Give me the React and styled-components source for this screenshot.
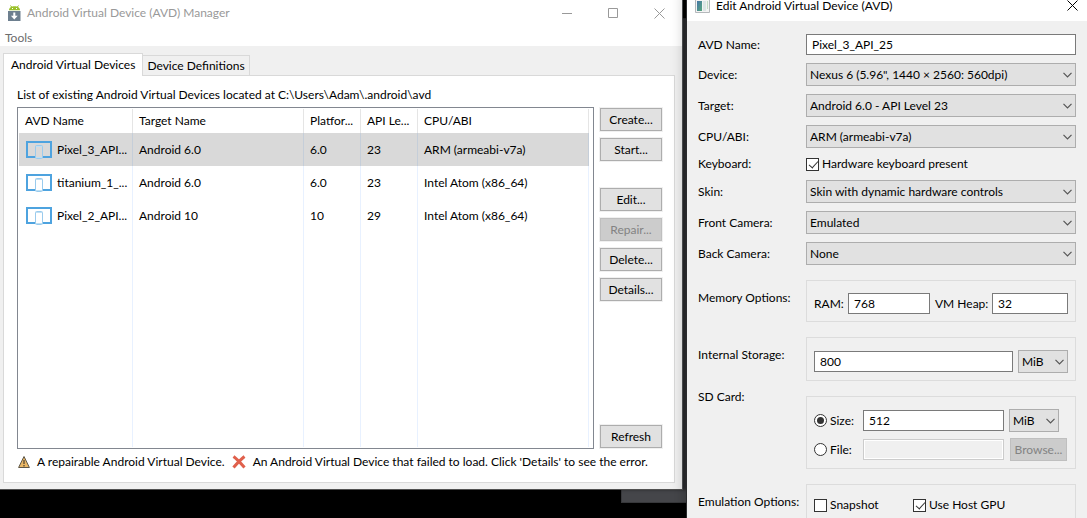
import React, { useState } from "react";
import styled, { createGlobalStyle } from "styled-components";

const GlobalStyle = createGlobalStyle`
  * {
    box-sizing: border-box;
  }
  body {
    margin: 0;
    background: #000;
    overflow: hidden;
  }
  body, button, input, select {
    font-family: Lato, "Open Sans", sans-serif;
    font-size: 12px;
    line-height: 16px;
    color: #000;
  }
`;

const Desktop = styled.div`
  position: relative;
  display: flex;
  align-items: flex-start;
  gap: 3px;
  height: 100vh;
  overflow: hidden;
  background: #000;
`;
const BackWindow = styled.div`
  position: absolute;
  top: 18px;
  left: 621px;
  right: 0;
  height: 485px;
  background: #45464a;
  border: 1px solid #37383b;
`;

/* windows */
const ManagerWindow = styled.section`
  position: relative;
  flex: 1;
  min-width: 0;
  background: #f0f0f0;
  border-right: 1px solid #505254;
  border-bottom: 1px solid #505050;
  box-shadow: 4px 0 3px rgba(0, 0, 0, 0.4);
`;
const DialogWindow = styled.section`
  position: relative;
  flex: 0 0 401px;
  min-height: calc(100% + 40px);
  margin-top: -10px;
  background: #f0f0f0;
  border-left: 1px solid #2a2b2d;
  box-shadow: 0 0 14px rgba(0, 0, 0, 0.3);
`;
const TitleBar = styled.header`
  display: flex;
  align-items: center;
  height: ${(props) => (props.$dialog ? "31px" : "26px")};
  padding-left: 8px;
  background: #fff;
  color: ${(props) => (props.$dialog ? "#000" : "#999")};
`;
const Title = styled.h1`
  flex: 1;
  margin: 0 0 0 6px;
  font-size: 12px;
  line-height: 12px;
  font-weight: 400;
  white-space: nowrap;
`;
const WindowButton = styled.button`
  display: flex;
  align-items: center;
  justify-content: center;
  width: ${(props) => (props.$dialog ? "29px" : "46px")};
  height: 26px;
  padding: 0;
  border: 0;
  background: none;
  color: inherit;
`;
const MenuBar = styled.nav`
  display: flex;
  height: 20px;
  padding-left: 5px;
  background: #fff;
`;
const MenuItem = styled.button`
  padding: 4px 0 0;
  border: 0;
  background: none;
  color: #6d6d6d;
`;

/* tabs */
const ManagerBody = styled.div`
  padding: 7px 7px 6px 3px;
`;
const TabList = styled.div`
  display: flex;
  align-items: flex-end;
`;
const Tab = styled.button`
  position: relative;
  height: ${(props) => (props.$active ? "23px" : "20px")};
  margin-bottom: ${(props) => (props.$active ? "-1px" : "0")};
  padding: 0 ${(props) => (props.$active ? "7px" : "4px")};
  border: 1px solid #d9d9d9;
  border-bottom: 0;
  border-left-width: ${(props) => (props.$active ? "1px" : "0")};
  background: ${(props) => (props.$active ? "#fff" : "#f0f0f0")};
  white-space: nowrap;
`;
const TabPanel = styled.div`
  padding: 11px 12px 12px 13px;
  border: 1px solid #d9d9d9;
  background: #fff;
`;
const ListLabel = styled.p`
  margin: 0 0 4px;
`;
const ListArea = styled.div`
  display: flex;
  gap: 6px;
`;

/* device list */
const ListFrame = styled.div`
  flex: 1;
  min-width: 0;
  padding: 1px 4px 1px 1px;
  border: 1px solid #828790;
`;
const DeviceTable = styled.table`
  width: 100%;
  height: 338px;
  table-layout: fixed;
  border-collapse: separate;
  border-spacing: 0;
`;
const Col = styled.col`
  width: ${(props) => props.$width};
`;
const HeadCell = styled.th`
  height: 24px;
  padding: 0 0 0 6px;
  border-right: 1px solid #e5e5e5;
  font-weight: 400;
  text-align: left;
  white-space: nowrap;
`;
const Row = styled.tr`
  height: ${(props) => (props.$filler ? "auto" : "33px")};
  background: ${(props) => (props.$selected ? "#d9d9d9" : "#fff")};
`;
const Cell = styled.td`
  padding: 0 0 0 6px;
  border-right: 1px solid ${(props) => (props.$selected ? "#c5ced9" : "#e8f1ff")};
  white-space: nowrap;
`;
const NameCell = styled.div`
  display: flex;
  align-items: center;
  gap: 5px;
  padding-left: 1px;
`;

const ButtonColumn = styled.div`
  display: flex;
  flex-direction: column;
  gap: 7px;
  width: 62px;
  padding: 1px 0;
`;
const ButtonGroup = styled.div`
  display: flex;
  flex-direction: column;
  gap: 7px;
  margin-top: ${(props) => props.$space || "0"};
`;
const PushButton = styled.button`
  height: 23px;
  padding: 0;
  border: 1px solid #adadad;
  background: #e1e1e1;
  box-shadow: 0 0 0 1px #f0f0f0;
  &:disabled {
    border-color: #bfbfbf;
    background: #ccc;
    color: #838383;
  }
`;
const Legend = styled.footer`
  display: flex;
  align-items: center;
  gap: 7px;
  margin-top: 5px;
  padding-left: 1px;
  white-space: nowrap;
  svg {
    flex-shrink: 0;
  }
`;

/* dialog form */
const Form = styled.form`
  display: grid;
  grid-template-columns: 108px 1fr;
  align-items: center;
  row-gap: 8px;
  padding: 13px 11px 0;
`;
const Label = styled.label`
  white-space: nowrap;
`;
const GroupLabel = styled.span`
  align-self: start;
  margin-top: ${(props) => (props.$top ? "0" : "17px")};
  white-space: nowrap;
`;
const TextBox = styled.input`
  width: 100%;
  min-width: 0;
  height: 21px;
  padding: 0 5px;
  border: 1px solid #7a7a7a;
  background: #fff;
  outline: none;
  &:disabled {
    border-color: #ccc;
    background: #f0f0f0;
    box-shadow: inset 0 0 0 1px #fff;
  }
`;
const SelectWrap = styled.div`
  position: relative;
  width: ${(props) => (props.$small ? "50px" : "100%")};
  height: 23px;
  flex-shrink: 0;
  svg {
    position: absolute;
    top: 9px;
    right: 4px;
    pointer-events: none;
  }
`;
const SelectBox = styled.select`
  width: 100%;
  height: 23px;
  padding: 0 3px;
  border: 1px solid #adadad;
  border-radius: 0;
  background: #e1e1e1;
  appearance: none;
  outline: none;
`;
const Group = styled.div`
  margin-top: 7px;
  padding: 12px 7px 7px;
  border: 1px solid #dcdcdc;
`;
const Fields = styled.div`
  display: grid;
  grid-template-columns: ${(props) => props.$columns};
  align-items: center;
  gap: 6px 5px;
`;
const Choice = styled.label`
  display: flex;
  align-items: center;
  gap: 3px;
  white-space: nowrap;
`;
const CheckBox = styled.input`
  position: relative;
  width: 13px;
  height: 13px;
  margin: 0;
  border: 1px solid #333;
  background: #fff;
  appearance: none;
  &:checked::after {
    content: "";
    position: absolute;
    top: 0;
    left: 4px;
    width: 4px;
    height: 8px;
    border: solid #333;
    border-width: 0 1px 1px 0;
    transform: rotate(42deg);
  }
`;
const Radio = styled(CheckBox)`
  border-radius: 50%;
  &:checked::after {
    top: 2px;
    left: 2px;
    width: 7px;
    height: 7px;
    border: 0;
    border-radius: 50%;
    background: #333;
    transform: none;
  }
`;
const BrowseButton = styled(PushButton)`
  width: 57px;
  justify-self: center;
  box-shadow: none;
`;

const AndroidIcon = () => (
  <svg width="13" height="16" viewBox="0 0 13 16">
    <path d="M2.5 0.5l1.5 2M10.5 0.5l-1.5 2" stroke="#9bc12b" strokeWidth="1" />
    <path d="M1 5.2C1 2.8 3.5 1.3 6.5 1.3S12 2.8 12 5.2z" fill="#9bc12b" />
    <path d="M4 3h1v1H4zM8 3h1v1H8z" fill="#fff" />
    <path d="M0 6h12.5v10H0z" fill="#6d7f8f" />
    <path d="M5.3 7.5h2v3.2h2.4L6.3 14.4 2.9 10.7h2.4z" fill="#fff" />
  </svg>
);
const DialogIcon = () => (
  <svg width="15" height="15" viewBox="0 0 15 15">
    <defs>
      <linearGradient id="pane" x1="0" y1="0" x2="1" y2="1">
        <stop offset="0" stopColor="#4576a8" />
        <stop offset="1" stopColor="#58a77d" />
      </linearGradient>
    </defs>
    <path d="M.5.5h14v14H.5z" fill="#f3f3f3" stroke="#b4b8bb" />
    <path d="M2 3h5v10H2z" fill="url(#pane)" />
    <path d="M8 3h3v10H8z" fill="#dce5e5" />
    <path d="M12 3h1v8h-1z" fill="#c5dcc6" />
  </svg>
);
const DeviceIcon = () => (
  <svg width="26" height="18" viewBox="0 0 26 18">
    <path d="M9.5 16H1V1h24v15h-8.5" fill="none" stroke="#4ea3df" strokeWidth="2" />
    <rect x="9.5" y="4.5" width="7" height="13" rx="1" fill="none" stroke="#9acbed" />
    <path d="M10 5.5h6M10 16.5h6" stroke="#bfdff3" />
  </svg>
);
const Chevron = () => (
  <svg width="9" height="6" viewBox="0 0 9 6">
    <path d="M.5.8l4 4 4-4" fill="none" stroke="#555" strokeWidth="1.2" />
  </svg>
);
const WarningIcon = () => (
  <svg width="12" height="14" viewBox="0 0 12 14">
    <path d="M6 1.5L11.4 12.5H.6z" fill="#eab765" stroke="#5c5648" />
    <path d="M6 5v4M6 10v1.4" stroke="#4a4030" strokeWidth="1.2" />
  </svg>
);
const ErrorIcon = () => (
  <svg width="14" height="14" viewBox="0 0 14 14">
    <path d="M1.5 1.5Q5 4 12.5 12.5M12.5 1.5Q8 5 1.5 12.5" fill="none" stroke="#e0604c" strokeWidth="3" />
  </svg>
);
const CloseIcon = () => (
  <svg width="11" height="11" viewBox="0 0 11 11">
    <path d="M.5.5l10 10M10.5.5l-10 10" stroke="currentColor" />
  </svg>
);

const columns = [
  { title: "AVD Name", width: "20%" },
  { title: "Target Name", width: "30%" },
  { title: "Platfor...", width: "10%" },
  { title: "API Le...", width: "10%" },
  { title: "CPU/ABI", width: "30%" },
];
const devices = [
  ["Pixel_3_API...", "Android 6.0", "6.0", "23", "ARM (armeabi-v7a)"],
  ["titanium_1_...", "Android 6.0", "6.0", "23", "Intel Atom (x86_64)"],
  ["Pixel_2_API...", "Android 10", "10", "29", "Intel Atom (x86_64)"],
];

function Select({ id, label, value, small }) {
  return (
    <SelectWrap $small={small}>
      <SelectBox id={id} aria-label={label} defaultValue={value}>
        <option>{value}</option>
      </SelectBox>
      <Chevron />
    </SelectWrap>
  );
}

function Manager() {
  const [selected, setSelected] = useState(0);

  return (
    <ManagerWindow>
      <TitleBar>
        <AndroidIcon />
        <Title>Android Virtual Device (AVD) Manager</Title>
        <WindowButton aria-label="Minimize">
          <svg width="11" height="11" viewBox="0 0 11 11">
            <path d="M0 5.5h10" stroke="currentColor" />
          </svg>
        </WindowButton>
        <WindowButton aria-label="Maximize">
          <svg width="11" height="11" viewBox="0 0 11 11">
            <path d="M.5.5h9v9h-9z" fill="none" stroke="currentColor" />
          </svg>
        </WindowButton>
        <WindowButton aria-label="Close">
          <CloseIcon />
        </WindowButton>
      </TitleBar>
      <MenuBar>
        <MenuItem>Tools</MenuItem>
      </MenuBar>
      <ManagerBody>
        <TabList role="tablist">
          <Tab role="tab" aria-selected="true" $active>
            Android Virtual Devices
          </Tab>
          <Tab role="tab" aria-selected="false">
            Device Definitions
          </Tab>
        </TabList>
        <TabPanel role="tabpanel">
          <ListLabel>
            List of existing Android Virtual Devices located at C:\Users\Adam\.android\avd
          </ListLabel>
          <ListArea>
            <ListFrame>
              <DeviceTable>
                <colgroup>
                  {columns.map((column) => (
                    <Col key={column.title} $width={column.width} />
                  ))}
                </colgroup>
                <thead>
                  <tr>
                    {columns.map((column) => (
                      <HeadCell key={column.title}>{column.title}</HeadCell>
                    ))}
                  </tr>
                </thead>
                <tbody>
                  {devices.map((device, index) => (
                    <Row
                      key={device[0]}
                      $selected={index === selected}
                      onClick={() => setSelected(index)}
                    >
                      {device.map((text, i) => (
                        <Cell key={i} $selected={index === selected}>
                          {i === 0 ? (
                            <NameCell>
                              <DeviceIcon />
                              {text}
                            </NameCell>
                          ) : (
                            text
                          )}
                        </Cell>
                      ))}
                    </Row>
                  ))}
                  <Row $filler>
                    {columns.map((column) => (
                      <Cell key={column.title} />
                    ))}
                  </Row>
                </tbody>
              </DeviceTable>
            </ListFrame>
            <ButtonColumn>
              <ButtonGroup>
                <PushButton>Create...</PushButton>
                <PushButton>Start...</PushButton>
              </ButtonGroup>
              <ButtonGroup $space="20px">
                <PushButton>Edit...</PushButton>
                <PushButton disabled>Repair...</PushButton>
                <PushButton>Delete...</PushButton>
                <PushButton>Details...</PushButton>
              </ButtonGroup>
              <ButtonGroup $space="auto">
                <PushButton>Refresh</PushButton>
              </ButtonGroup>
            </ButtonColumn>
          </ListArea>
          <Legend>
            <WarningIcon />
            <span>A repairable Android Virtual Device.</span>
            <ErrorIcon />
            <span>An Android Virtual Device that failed to load. Click 'Details' to see the error.</span>
          </Legend>
        </TabPanel>
      </ManagerBody>
    </ManagerWindow>
  );
}

function EditDialog() {
  return (
    <DialogWindow>
      <TitleBar $dialog>
        <DialogIcon />
        <Title>Edit Android Virtual Device (AVD)</Title>
        <WindowButton $dialog aria-label="Close">
          <CloseIcon />
        </WindowButton>
      </TitleBar>
      <Form onSubmit={(e) => e.preventDefault()}>
        <Label htmlFor="name">AVD Name:</Label>
        <TextBox id="name" defaultValue="Pixel_3_API_25" />
        <Label htmlFor="device">Device:</Label>
        <Select id="device" value={'Nexus 6 (5.96", 1440 × 2560: 560dpi)'} />
        <Label htmlFor="target">Target:</Label>
        <Select id="target" value="Android 6.0 - API Level 23" />
        <Label htmlFor="cpu">CPU/ABI:</Label>
        <Select id="cpu" value="ARM (armeabi-v7a)" />
        <Label htmlFor="keyboard">Keyboard:</Label>
        <Choice>
          <CheckBox id="keyboard" type="checkbox" defaultChecked />
          Hardware keyboard present
        </Choice>
        <Label htmlFor="skin">Skin:</Label>
        <Select id="skin" value="Skin with dynamic hardware controls" />
        <Label htmlFor="front">Front Camera:</Label>
        <Select id="front" value="Emulated" />
        <Label htmlFor="back">Back Camera:</Label>
        <Select id="back" value="None" />

        <GroupLabel>Memory Options:</GroupLabel>
        <Group>
          <Fields $columns="29px 82px 52px 1fr">
            <Label htmlFor="ram">RAM:</Label>
            <TextBox id="ram" defaultValue="768" />
            <Label htmlFor="heap">VM Heap:</Label>
            <TextBox id="heap" defaultValue="32" />
          </Fields>
        </Group>

        <GroupLabel>Internal Storage:</GroupLabel>
        <Group>
          <Fields $columns="1fr 50px">
            <TextBox aria-label="Internal Storage" defaultValue="800" />
            <Select label="Internal Storage unit" value="MiB" small />
          </Fields>
        </Group>

        <GroupLabel $top>SD Card:</GroupLabel>
        <Group>
          <Fields $columns="44px 1fr 59px">
            <Choice>
              <Radio type="radio" name="sdcard" defaultChecked />
              Size:
            </Choice>
            <TextBox aria-label="SD card size" defaultValue="512" />
            <Select label="SD card unit" value="MiB" small />
            <Choice>
              <Radio type="radio" name="sdcard" />
              File:
            </Choice>
            <TextBox aria-label="SD card file" disabled />
            <BrowseButton type="button" disabled>
              Browse...
            </BrowseButton>
          </Fields>
        </Group>

        <GroupLabel>Emulation Options:</GroupLabel>
        <Group>
          <Fields $columns="94px 1fr">
            <Choice>
              <CheckBox type="checkbox" />
              Snapshot
            </Choice>
            <Choice>
              <CheckBox type="checkbox" defaultChecked />
              Use Host GPU
            </Choice>
          </Fields>
        </Group>
      </Form>
    </DialogWindow>
  );
}

function App() {
  return (
    <Desktop>
      <GlobalStyle />
      <BackWindow />
      <Manager />
      <EditDialog />
    </Desktop>
  );
}

export default App;
